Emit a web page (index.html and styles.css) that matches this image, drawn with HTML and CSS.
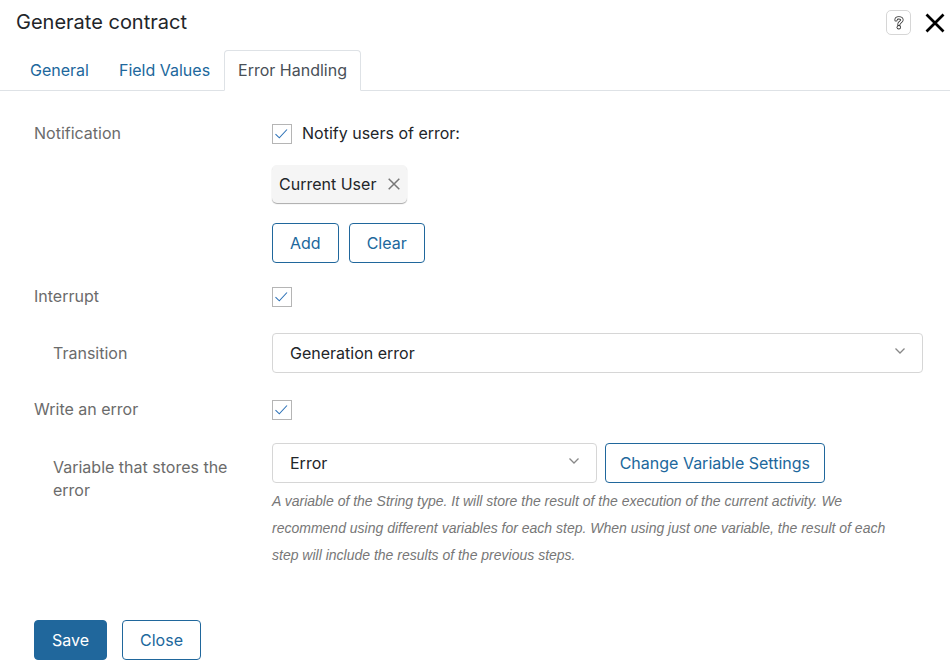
FILE: index.html
```html
<!DOCTYPE html>
<html lang="en">
<head>
  <meta charset="utf-8">
  <meta name="viewport" content="width=device-width, initial-scale=1">
  <title>Generate contract</title>
  <link rel="stylesheet" href="styles.css">
</head>
<body>
  <header class="header">
    <h1 class="title">Generate contract</h1>
    <div class="header-actions">
      <button class="help" type="button" aria-label="Help">
        <svg width="10" height="14" viewBox="0 0 10 14" fill="none" stroke-linecap="round" stroke-linejoin="round">
          <path d="M2 4C2 2.3 3.2 1.8 4.8 1.8S8 2.6 8 4.1C8 5.8 4.9 6 4.9 8.2" stroke="#333" stroke-width="3.2"/>
          <circle cx="4.8" cy="11.3" r="2.2" fill="#333"/>
          <path d="M2 4C2 2.3 3.2 1.8 4.8 1.8S8 2.6 8 4.1C8 5.8 4.9 6 4.9 8.2" stroke="#fff" stroke-width="1.6"/>
          <circle cx="4.8" cy="11.3" r="1.3" fill="#fff"/>
        </svg>
      </button>
      <button class="dismiss" type="button" aria-label="Close window">
        <svg width="20" height="20" viewBox="0 0 20 20" fill="none" stroke="#000" stroke-width="2.7"><path d="M1.5 1.5l17 17M18.5 1.5l-17 17"/></svg>
      </button>
    </div>
  </header>

  <nav class="tabs">
    <a class="tab" href="#general">General</a>
    <a class="tab" href="#values">Field Values</a>
    <a class="tab tab-active" href="#errors" aria-current="page">Error Handling</a>
  </nav>

  <form class="form">
    <div class="row">
      <span class="label">Notification</span>
      <div class="stack">
        <div class="check-line">
          <span class="check">
            <input type="checkbox" id="notify" checked>
            <svg width="20" height="20" viewBox="0 0 20 20" fill="none" stroke="#2f73b8" stroke-width="1.1"><path d="M3.5 10.2l3.8 3.6L15 5.5"/></svg>
          </span>
          <label for="notify">Notify users of error:</label>
        </div>
        <div class="chip">
          <span>Current User</span>
          <button class="chip-remove" type="button" aria-label="Remove Current User">
            <svg width="12" height="12" viewBox="0 0 12 12" fill="none" stroke="#777" stroke-width="1.5"><path d="M.7.7l10.6 10.6M11.3.7L.7 11.3"/></svg>
          </button>
        </div>
        <div class="buttons">
          <button class="btn" type="button">Add</button>
          <button class="btn" type="button">Clear</button>
        </div>
      </div>
    </div>

    <div class="row">
      <label class="label" for="interrupt">Interrupt</label>
      <div class="check-line">
        <span class="check">
          <input type="checkbox" id="interrupt" checked>
          <svg width="20" height="20" viewBox="0 0 20 20" fill="none" stroke="#2f73b8" stroke-width="1.1"><path d="M3.5 10.2l3.8 3.6L15 5.5"/></svg>
        </span>
      </div>
    </div>

    <div class="row row-select">
      <label class="label label-sub" for="transition">Transition</label>
      <span class="select">
        <select id="transition"><option>Generation error</option></select>
        <svg width="10" height="6" viewBox="0 0 10 6" fill="none" stroke="#888" stroke-width="1.3"><path d="M.5.5L5 5 9.5.5"/></svg>
      </span>
    </div>

    <div class="row">
      <label class="label" for="write">Write an error</label>
      <div class="check-line">
        <span class="check">
          <input type="checkbox" id="write" checked>
          <svg width="20" height="20" viewBox="0 0 20 20" fill="none" stroke="#2f73b8" stroke-width="1.1"><path d="M3.5 10.2l3.8 3.6L15 5.5"/></svg>
        </span>
      </div>
    </div>

    <div class="row row-variable">
      <label class="label label-sub" for="variable">Variable that stores the error</label>
      <div>
        <div class="variable">
          <span class="select">
            <select id="variable"><option>Error</option></select>
            <svg width="10" height="6" viewBox="0 0 10 6" fill="none" stroke="#888" stroke-width="1.3"><path d="M.5.5L5 5 9.5.5"/></svg>
          </span>
          <button class="btn btn-tight" type="button">Change Variable Settings</button>
        </div>
        <p class="hint">A variable of the String type. It will store the result of the execution of the current activity. We recommend using different variables for each step. When using just one variable, the result of each step will include the results of the previous steps.</p>
      </div>
    </div>

    <footer class="footer">
      <button class="btn btn-primary" type="submit">Save</button>
      <button class="btn" type="button">Close</button>
    </footer>
  </form>
</body>
</html>
```
FILE: styles.css
```css
* { box-sizing: border-box; }

body {
  margin: 0;
  background: #fff;
  color: #222529;
  font: 16px/23px Inter, "Liberation Sans", sans-serif;
}

button, select, input { font: inherit; margin: 0; }

button { cursor: pointer; }

svg { display: block; }

.header {
  display: flex;
  align-items: center;
  justify-content: space-between;
  height: 45px;
  padding: 0 5px 0 16px;
}

.title {
  margin: 0;
  font-size: 20px;
  font-weight: 400;
}

.header-actions {
  display: flex;
  align-items: center;
  gap: 14px;
}

.help {
  display: grid;
  place-items: center;
  width: 25px;
  height: 25px;
  padding: 0;
  border: 1px solid #d6d6d6;
  border-radius: 5px;
  background: #fff;
}

.dismiss, .chip-remove {
  padding: 0;
  border: 0;
  background: none;
}

.tabs {
  display: flex;
  padding: 5px 0 0 16px;
  border-bottom: 1px solid #dee2e6;
}

.tab {
  margin-bottom: -1px;
  padding: 8px 13px;
  border: 1px solid transparent;
  border-radius: 4px 4px 0 0;
  color: #20679c;
  text-decoration: none;
}

.tab:first-child { padding-right: 15px; }

.tab-active {
  border-color: #dee2e6;
  border-bottom-color: #fff;
  background: #fff;
  color: #495057;
}

.form { padding: 31px 27px 6px 34px; }

.row {
  display: grid;
  grid-template-columns: 238px minmax(0, 1fr);
  margin-bottom: 22px;
}

.row-select {
  align-items: center;
  padding: 3px 0;
}

.label {
  padding-right: 30px;
  color: #6b6b6b;
}

.label-sub { padding-left: 19px; }

.stack {
  display: grid;
  gap: 20px;
  justify-items: start;
}

.check-line {
  display: flex;
  align-items: center;
  gap: 10px;
  height: 23px;
}

.check, .select { display: grid; }

.check > *, .select > * { grid-area: 1 / 1; }

.check svg, .select svg { pointer-events: none; }

.check input {
  appearance: none;
  width: 20px;
  height: 20px;
  border: 1px solid #b5b5b5;
  background: #fff;
}

.chip {
  display: flex;
  align-items: center;
  gap: 12px;
  height: 38px;
  padding: 0 7px;
  border-radius: 5px;
  background: #f5f5f5;
  box-shadow: 0 1px 1px #aaa;
}

.buttons {
  display: flex;
  gap: 10px;
}

.btn {
  height: 40px;
  padding: 0 17px;
  border: 1px solid #20679c;
  border-radius: 4px;
  background: #fff;
  color: #20679c;
  white-space: nowrap;
}

.btn-primary {
  background: #20679c;
  color: #fff;
}

.btn-tight { padding: 0 14px; }

.select svg {
  align-self: center;
  justify-self: end;
  margin: 0 18px 5px 0;
}

.select select {
  appearance: none;
  width: 100%;
  height: 40px;
  padding: 0 36px 0 17px;
  border: 1px solid #d6d6d6;
  border-radius: 4px;
  background: #fff;
  color: #222529;
}

.row-variable .label { padding-top: 13px; }

.variable {
  display: grid;
  grid-template-columns: minmax(0, 1fr) auto;
  gap: 8px;
  margin-right: 98px;
}

.hint {
  margin: 5px 0 0;
  padding-right: 24px;
  color: #777;
  font-family: "Liberation Sans", Arial, sans-serif;
  font-size: 14px;
  font-style: italic;
  line-height: 27px;
}

.footer {
  display: flex;
  gap: 15px;
  padding-top: 29px;
}
```
